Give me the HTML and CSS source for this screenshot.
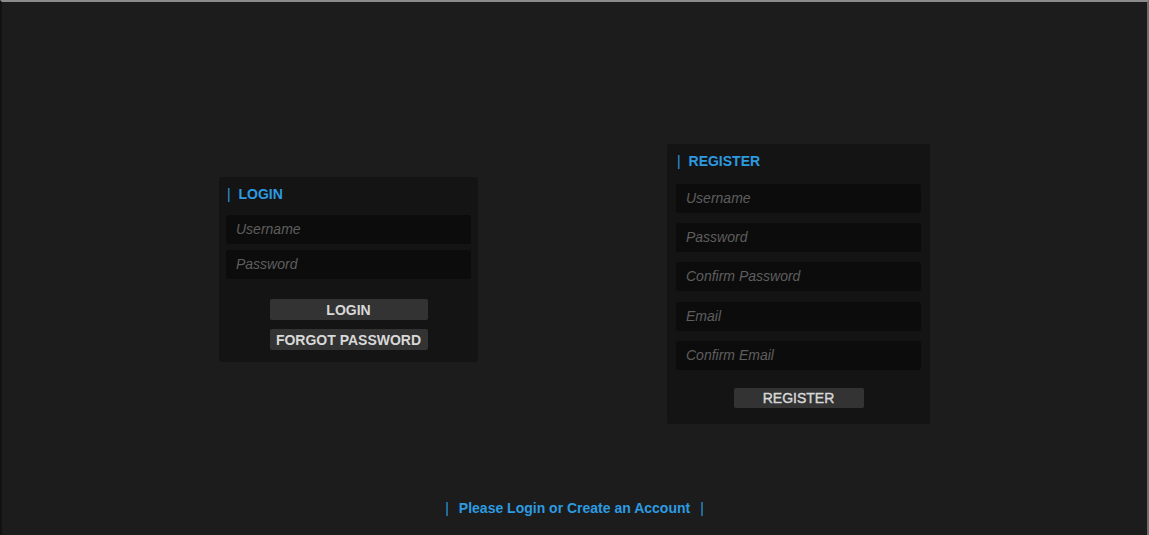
FILE: index.html
```html
<!DOCTYPE html>
<html>
<head>
<meta charset="utf-8">
<link rel="stylesheet" href="styles.css">
</head>
<body>
<div class="frame">
  <div class="panels">
    <section class="card card-login">
      <h2 class="title"><span class="bar">|</span> LOGIN</h2>
      <div class="field">Username</div>
      <div class="field">Password</div>
      <div class="actions">
        <button class="btn btn-wide">LOGIN</button>
        <button class="btn btn-wide">FORGOT PASSWORD</button>
      </div>
    </section>
    <section class="card card-register">
      <h2 class="title"><span class="bar">|</span> REGISTER</h2>
      <div class="field">Username</div>
      <div class="field">Password</div>
      <div class="field field-gap">Confirm Password</div>
      <div class="field">Email</div>
      <div class="field">Confirm Email</div>
      <div class="actions">
        <button class="btn btn-reg">REGISTER</button>
      </div>
    </section>
  </div>
  <footer class="status"><span class="bar">|</span><span class="msg">Please Login or Create an Account</span><span class="bar">|</span></footer>
</div>
</body>
</html>
```

FILE: styles.css
```css
html, body {
  margin: 0;
  padding: 0;
  background: #1c1c1c;
  font-family: "Liberation Sans", Arial, sans-serif;
}
.frame {
  box-sizing: border-box;
  width: 1149px;
  height: 535px;
  border-top: 2px solid #8c8c8c;
  border-right: 2px solid #6e6e6e;
  border-left: 2px solid #121212;
  background: #1c1c1c;
  display: flex;
  flex-direction: column;
}
.panels {
  display: flex;
  align-items: flex-start;
  height: 490px;
}
.card {
  box-sizing: border-box;
  background: #141414;
  border-radius: 3px;
  padding: 0 7px;
}
.card-login {
  margin-left: 217px;
  margin-top: 175px;
  width: 259px;
  height: 185px;
}
.card-register {
  margin-left: 189px;
  margin-top: 142px;
  width: 263px;
  height: 280px;
  padding: 0 9px;
}
.title {
  margin: 0;
  height: 38px;
  line-height: 35px;
  font-size: 14px;
  font-weight: bold;
  color: #2c9be0;
  padding-left: 1px;
}
.card-register .title {
  height: 40px;
  line-height: 34px;
}
.bar {
  font-weight: normal;
  color: #2c9be0;
  margin-right: 4px;
}
.field {
  box-sizing: border-box;
  height: 29px;
  line-height: 29px;
  background: #0c0c0c;
  border-radius: 3px;
  padding-left: 10px;
  font-size: 14px;
  font-style: italic;
  color: #5e5e5e;
  margin-bottom: 6px;
}
.card-register .field {
  margin-bottom: 10px;
}
.card-register .field-gap {
  margin-bottom: 11px;
}
.actions {
  display: flex;
  flex-direction: column;
  align-items: center;
  gap: 9px;
  padding-top: 14px;
}
.card-register .actions {
  padding-top: 8px;
}
.btn {
  border: none;
  background: #333333;
  border-radius: 2px;
  color: #d8d8d8;
  font-family: "Liberation Sans", Arial, sans-serif;
  font-weight: bold;
  font-size: 14px;
  height: 21px;
  padding: 0;
  cursor: pointer;
}
.btn-wide {
  width: 158px;
}
.btn-reg {
  width: 130px;
  height: 20px;
  font-weight: normal;
  font-size: 14px;
  -webkit-text-stroke: 0.4px #d8d8d8;
}
.status {
  text-align: center;
  font-size: 14px;
  font-weight: bold;
  color: #2c9be0;
  line-height: 18px;
  padding-top: 7px;
}
.status .bar {
  margin: 0;
}
.status .msg {
  margin: 0 10px;
}
```
